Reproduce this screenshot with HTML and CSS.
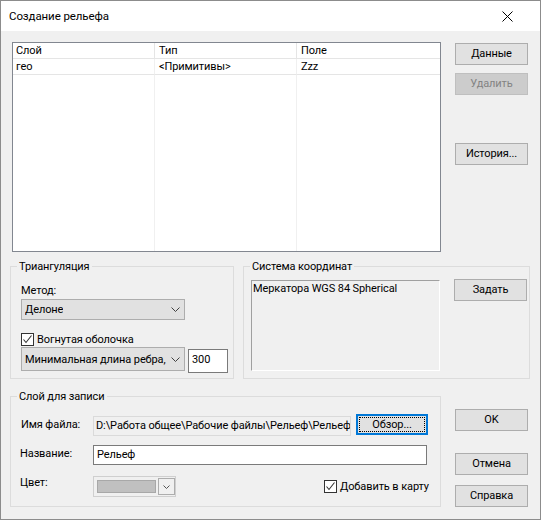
FILE: index.html
```html
<!DOCTYPE html>
<html lang="ru">
<head>
<meta charset="utf-8">
<title>Создание рельефа</title>
<link rel="stylesheet" href="styles.css">
</head>
<body>
<div class="window">
  <div class="titlebar">
    <span class="title">Создание рельефа</span>
    <svg class="close" width="11" height="11" viewBox="0 0 11 11"><path d="M0.5 0.5 L10.5 10.5 M10.5 0.5 L0.5 10.5" stroke="#000" stroke-width="1" fill="none"/></svg>
  </div>
  <div class="content">
    <div class="sec-top">
      <div class="table">
        <div class="col c1">
          <div class="th">Слой</div>
          <div class="td">гео</div>
          <div class="fill"></div>
        </div>
        <div class="col c2">
          <div class="th">Тип</div>
          <div class="td">&lt;Примитивы&gt;</div>
          <div class="fill"></div>
        </div>
        <div class="col c3">
          <div class="th">Поле</div>
          <div class="td">Zzz</div>
          <div class="fill"></div>
        </div>
      </div>
      <div class="btncol">
        <button class="btn b-data">Данные</button>
        <button class="btn disabled b-del">Удалить</button>
        <button class="btn b-hist">История...</button>
      </div>
    </div>

    <div class="sec-mid">
      <div class="group g-tri">
        <div class="gtitle">Триангуляция</div>
        <div class="tri-body">
          <div class="lbl-method">Метод:</div>
          <div class="combo c-method">
            <span class="combo-text">Делоне</span>
            <svg class="chev" width="9" height="5" viewBox="0 0 9 5"><path d="M0.5 0.5 L4.5 4.5 L8.5 0.5" stroke="#404040" fill="none"/></svg>
          </div>
          <div class="check-row">
            <span class="cb"><svg width="11" height="11" viewBox="0 0 11 11"><path d="M1.5 5.5 L4 8.5 L9.5 1.5" stroke="#333" stroke-width="1.1" fill="none"/></svg></span>
            <span>Вогнутая оболочка</span>
          </div>
          <div class="edge-row">
            <div class="combo c-edge">
              <span class="combo-text">Минимальная длина ребра,</span>
              <svg class="chev" width="9" height="5" viewBox="0 0 9 5"><path d="M0.5 0.5 L4.5 4.5 L8.5 0.5" stroke="#404040" fill="none"/></svg>
            </div>
            <div class="edit e-300">300</div>
          </div>
        </div>
      </div>
      <div class="group g-coord">
        <div class="gtitle">Система координат</div>
        <div class="coord-body">
          <div class="listbox">Меркатора WGS 84 Spherical</div>
          <button class="btn b-set">Задать</button>
        </div>
      </div>
    </div>

    <div class="sec-bot">
      <div class="group g-layer">
        <div class="gtitle">Слой для записи</div>
        <div class="layer-body">
          <div class="frow r-file">
            <span class="flabel">Имя файла:</span>
            <div class="path">D:\Работа общее\Рабочие файлы\Рельеф\Рельеф</div>
            <button class="btn b-browse">Обзор...</button>
          </div>
          <div class="frow r-name">
            <span class="flabel l-name">Название:</span>
            <div class="edit e-name">Рельеф</div>
          </div>
          <div class="frow r-color">
            <span class="flabel l-color">Цвет:</span>
            <div class="color-combo">
              <span class="swatch"></span>
              <span class="dd"><svg width="7" height="4" viewBox="0 0 7 4"><path d="M0.5 0.5 L3.5 3.5 L6.5 0.5" stroke="#555" fill="none"/></svg></span>
            </div>
            <div class="check-row add-map">
              <span class="cb"><svg width="11" height="11" viewBox="0 0 11 11"><path d="M1.5 5.5 L4 8.5 L9.5 1.5" stroke="#333" stroke-width="1.1" fill="none"/></svg></span>
              <span>Добавить в карту</span>
            </div>
          </div>
        </div>
      </div>
      <div class="btncol">
        <button class="btn b-ok">OK</button>
        <button class="btn b-cancel">Отмена</button>
        <button class="btn b-help">Справка</button>
      </div>
    </div>
  </div>
</div>
</body>
</html>
```
FILE: styles.css
```css
* { box-sizing: border-box; }
html, body { margin: 0; padding: 0; }
body {
  font-family: Roboto, "Noto Sans", sans-serif;
  font-size: 11px;
  letter-spacing: -0.1px;
  color: #000;
  background: #f0f0f0;
}
.window {
  width: 541px;
  height: 520px;
  border: 1px solid #8c8c8c;
  background: #f0f0f0;
  display: flex;
  flex-direction: column;
  overflow: hidden;
}
.titlebar {
  flex: none;
  height: 30px;
  background: #fff;
  display: flex;
  align-items: center;
  justify-content: space-between;
  padding: 0 27px 0 8px;
}
.title { line-height: 16px; font-size: 11.5px; }
.close { display: block; margin-top: 1px; }

.content { padding-left: 9px; }

/* top section */
.sec-top { display: flex; margin-top: 11px; }
.table {
  margin-left: 2px;
  width: 429px;
  height: 210px;
  border: 1px solid #828790;
  background: #fff;
  display: flex;
}
.col { display: flex; flex-direction: column; }
.c1 { width: 142px; }
.c2 { width: 142px; }
.c3 { flex: 1; }
.th, .td {
  height: 16px;
  line-height: 15px;
  border-bottom: 1px solid #e5e5e5;
  white-space: nowrap;
  overflow: hidden;
}
.th { border-right: 1px solid #e5e5e5; }
.td { border-right: 1px solid #f0f0f0; }
.fill { flex: 1; border-right: 1px solid #f0f0f0; }
.c1 .th, .c1 .td { padding-left: 3px; }
.c2 .th, .c2 .td, .c3 .th, .c3 .td { padding-left: 4px; }
.c3 .th, .c3 .td, .c3 .fill { border-right: none; }

.btncol { display: flex; flex-direction: column; margin-left: 14px; }
.btn {
  font: inherit;
  letter-spacing: inherit;
  color: #000;
  width: 73px;
  height: 22px;
  padding: 0;
  margin: 0;
  border: 1px solid #adadad;
  background: #e1e1e1;
  line-height: 18px;
  text-align: center;
  white-space: nowrap;
}
.btn.disabled { background: #cccccc; border-color: #bfbfbf; color: #838383; }
.b-data { margin-top: 1px; }
.b-del { margin-top: 8px; }
.b-hist { margin-top: 48px; }

/* groups */
.group { border: 1px solid #dcdcdc; }
.gtitle {
  width: max-content;
  margin-top: -8px;
  margin-left: 6px;
  padding: 0 2px;
  background: #f0f0f0;
  line-height: 16px;
  height: 16px;
}

.sec-mid { display: flex; margin-top: 14px; gap: 9px; }
.g-tri { width: 224px; height: 113px; }
.g-coord { width: 287px; height: 113px; }

.tri-body { padding-left: 10px; }
.lbl-method { margin-top: 8px; line-height: 16px; }
.combo {
  display: flex;
  align-items: center;
  justify-content: space-between;
  border: 1px solid #adadad;
  background: #e1e1e1;
  padding: 0 4px 0 3px;
  white-space: nowrap;
}
.combo-text { overflow: hidden; }
.chev { flex: none; display: block; margin-left: 4px; }
.c-method { width: 164px; height: 21px; }
.check-row { display: flex; align-items: center; height: 16px; white-space: nowrap; }
.tri-body .check-row { margin-top: 11px; }
.cb {
  flex: none;
  width: 13px;
  height: 13px;
  border: 1px solid #333;
  background: #fff;
  margin-right: 3px;
  display: flex;
  align-items: center;
  justify-content: center;
}
.cb svg { display: block; }
.edge-row { display: flex; align-items: flex-start; }
.c-edge { width: 164px; height: 24px; }
.edit {
  border: 1px solid #7a7a7a;
  background: #fff;
  white-space: nowrap;
  overflow: hidden;
}
.e-300 {
  width: 40px;
  height: 24px;
  margin-left: 3px;
  margin-top: 2px;
  padding-left: 3px;
  line-height: 20px;
}

.coord-body { display: flex; align-items: flex-start; margin-top: 4px; padding-left: 7px; }
.listbox {
  width: 189px;
  height: 91px;
  margin-top: 1px;
  border-top: 1px solid #a0a0a0;
  border-left: 1px solid #a0a0a0;
  border-right: 1px solid #fff;
  border-bottom: 1px solid #fff;
  padding-left: 1px;
  line-height: 16px;
  white-space: nowrap;
}
.b-set { margin-left: 14px; }

/* bottom section */
.sec-bot { display: flex; margin-top: 17px; }
.g-layer { width: 431px; height: 111px; }
.layer-body { padding-left: 10px; }
.frow { display: flex; align-items: center; }
.flabel { width: 72px; flex: none; line-height: 16px; white-space: nowrap; }
.r-file { margin-top: 9px; height: 22px; align-items: flex-start; }
.r-file .flabel { margin-top: 3px; }
.path {
  width: 258px;
  height: 20px;
  margin-top: 2px;
  border: 1px solid #dadada;
  background: #f0f0f0;
  padding-left: 2px;
  line-height: 17px;
  white-space: nowrap;
  overflow: hidden;
}
.b-browse {
  width: 72px;
  height: 21px;
  margin-left: 5px;
  border: 2px solid #0078d7;
  line-height: 15px;
  outline: 1px dotted #000;
  outline-offset: -4px;
}
.r-name { margin-top: 9px; height: 20px; }
.l-name { margin-left: -1px; width: 73px; margin-top: -2px; }
.e-name {
  width: 334px;
  height: 20px;
  padding-left: 3px;
  line-height: 17px;
}
.r-color { margin-top: 11px; height: 21px; }
.l-color { margin-left: -1px; width: 73px; margin-top: -7px; }
.color-combo {
  width: 83px;
  height: 21px;
  border: 1px solid #cfcfcf;
  background: #f0f0f0;
  display: flex;
  align-items: center;
  padding-left: 3px;
}
.swatch {
  width: 59px;
  height: 13px;
  background: #c0c0c0;
  border: 1px solid #a8a8a8;
}
.dd {
  width: 17px;
  height: 17px;
  margin-left: 2px;
  border: 1px solid #adadad;
  background: #f0f0f0;
  display: flex;
  align-items: center;
  justify-content: center;
}
.dd svg { display: block; }
.add-map { margin-left: 148px; }

.b-ok { margin-top: 13px; }
.b-cancel { margin-top: 22px; }
.b-help { margin-top: 10px; }
```
